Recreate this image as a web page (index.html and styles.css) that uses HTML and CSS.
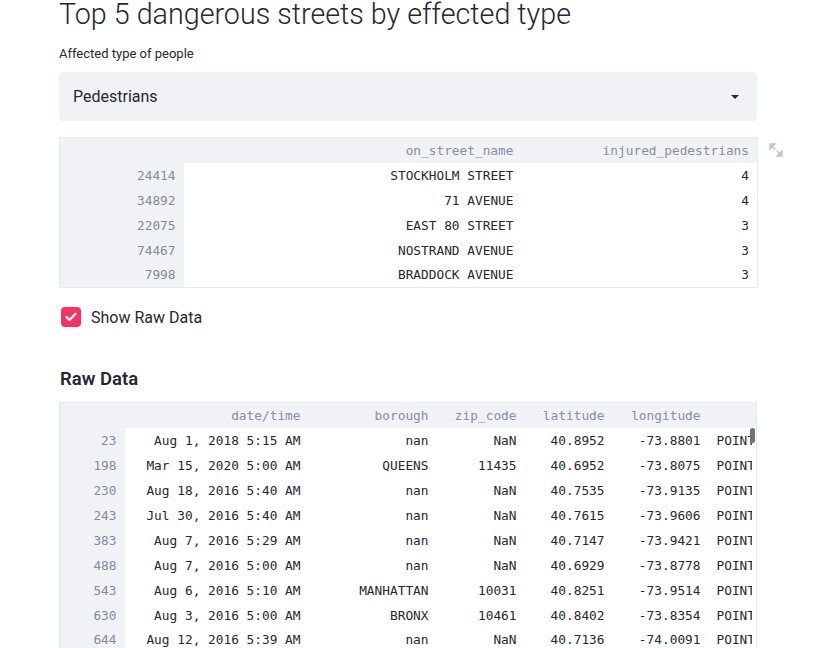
FILE: index.html
```html
<!DOCTYPE html>
<html>
<head>
<meta charset="utf-8">
<link rel="stylesheet" href="styles.css">
</head>
<body>
<div class="main">
  <h1 class="title">Top 5 dangerous streets by effected type</h1>
  <div class="label">Affected type of people</div>
  <div class="select">
    <span>Pedestrians</span>
    <svg class="caret" width="10" height="6" viewBox="0 0 10 6"><path d="M1 1h8L5 5z" fill="#262730"/></svg>
  </div>

  <div class="table-wrap t1">
    <table class="df">
      <thead>
        <tr><th class="idx"></th><th class="c1">on_street_name</th><th class="c2">injured_pedestrians</th></tr>
      </thead>
      <tbody>
        <tr><th class="idx">24414</th><td>STOCKHOLM STREET</td><td>4</td></tr>
        <tr><th class="idx">34892</th><td>71 AVENUE</td><td>4</td></tr>
        <tr><th class="idx">22075</th><td>EAST 80 STREET</td><td>3</td></tr>
        <tr><th class="idx">74467</th><td>NOSTRAND AVENUE</td><td>3</td></tr>
        <tr><th class="idx">7998</th><td>BRADDOCK AVENUE</td><td>3</td></tr>
      </tbody>
    </table>
    <svg class="expand" width="14" height="14" viewBox="0 0 14 14">
      <path d="M1 1h5L1 6z M3 3l3.5 3.5" fill="#c4c6cf" stroke="#c4c6cf" stroke-width="1.4"/>
      <path d="M13 13h-5l5-5z M11 11l-3.5-3.5" fill="#c4c6cf" stroke="#c4c6cf" stroke-width="1.4"/>
    </svg>
  </div>

  <label class="check">
    <span class="box"><svg width="12" height="10" viewBox="0 0 12 10"><path d="M1.5 5l3 3L10.5 1.8" fill="none" stroke="#fff" stroke-width="2.2" stroke-linecap="round" stroke-linejoin="round"/></svg></span>
    <span class="check-text">Show Raw Data</span>
  </label>

  <h2 class="sub">Raw Data</h2>

  <div class="table-wrap t2">
    <table class="df raw">
      <thead>
        <tr><th class="idx"></th><th class="w-date">date/time</th><th class="w-bor">borough</th><th class="w-zip">zip_code</th><th class="w-lat">latitude</th><th class="w-lon">longitude</th><th class="w-loc"></th></tr>
      </thead>
      <tbody>
        <tr><th class="idx">23</th><td>Aug 1, 2018 5:15 AM</td><td>nan</td><td>NaN</td><td>40.8952</td><td>-73.8801</td><td class="loc">POINT (-73.8801 40.8952)</td></tr>
        <tr><th class="idx">198</th><td>Mar 15, 2020 5:00 AM</td><td>QUEENS</td><td>11435</td><td>40.6952</td><td>-73.8075</td><td class="loc">POINT (-73.8075 40.6952)</td></tr>
        <tr><th class="idx">230</th><td>Aug 18, 2016 5:40 AM</td><td>nan</td><td>NaN</td><td>40.7535</td><td>-73.9135</td><td class="loc">POINT (-73.9135 40.7535)</td></tr>
        <tr><th class="idx">243</th><td>Jul 30, 2016 5:40 AM</td><td>nan</td><td>NaN</td><td>40.7615</td><td>-73.9606</td><td class="loc">POINT (-73.9606 40.7615)</td></tr>
        <tr><th class="idx">383</th><td>Aug 7, 2016 5:29 AM</td><td>nan</td><td>NaN</td><td>40.7147</td><td>-73.9421</td><td class="loc">POINT (-73.9421 40.7147)</td></tr>
        <tr><th class="idx">488</th><td>Aug 7, 2016 5:00 AM</td><td>nan</td><td>NaN</td><td>40.6929</td><td>-73.8778</td><td class="loc">POINT (-73.8778 40.6929)</td></tr>
        <tr><th class="idx">543</th><td>Aug 6, 2016 5:10 AM</td><td>MANHATTAN</td><td>10031</td><td>40.8251</td><td>-73.9514</td><td class="loc">POINT (-73.9514 40.8251)</td></tr>
        <tr><th class="idx">630</th><td>Aug 3, 2016 5:00 AM</td><td>BRONX</td><td>10461</td><td>40.8402</td><td>-73.8354</td><td class="loc">POINT (-73.8354 40.8402)</td></tr>
        <tr><th class="idx">644</th><td>Aug 12, 2016 5:39 AM</td><td>nan</td><td>NaN</td><td>40.7136</td><td>-74.0091</td><td class="loc">POINT (-74.0091 40.7136)</td></tr>
      </tbody>
    </table>
    <div class="scroll-thumb"></div>
  </div>
</div>
</body>
</html>
```
FILE: styles.css
```css
html, body {
  margin: 0;
  padding: 0;
  background: #ffffff;
  overflow: hidden;
  height: 648px;
}
body {
  font-family: "Roboto", "Noto Sans", sans-serif;
  color: #262730;
}
.main {
  width: 698px;
  padding-left: 59px;
}
.title {
  margin: 0;
  font-size: 28.7px;
  font-weight: 300;
  line-height: 29px;
  color: #262730;
}
.label {
  margin-top: 17px;
  font-size: 13px;
  line-height: 16px;
  color: #262730;
}
.select {
  margin-top: 10px;
  height: 49px;
  background: #f0f2f6;
  border-radius: 4px;
  display: flex;
  align-items: center;
  justify-content: space-between;
  padding: 0 17px 0 14px;
  font-size: 16px;
}
.caret { display: block; }
.table-wrap {
  position: relative;
}
.t1 { margin-top: 16px; }
.df {
  border-collapse: collapse;
  font-family: "DejaVu Sans Mono", monospace;
  font-size: 12.8px;
  color: #262730;
  border: 1px solid #e6e9ef;
  table-layout: fixed;
}
.df th, .df td {
  height: 25px;
  padding: 0 8px;
  text-align: right;
  white-space: nowrap;
  font-weight: 400;
  box-sizing: border-box;
  overflow: hidden;
}
.df thead th {
  background: #f0f2f6;
  color: #8a8ea3;
}
.df th.idx {
  background: #f0f2f6;
  color: #858aa0;
}
.t1 .df { width: 698px; }
.t1 .idx { width: 124px; }
.t1 .c1 { width: 338px; }
.t1 .c2 { width: 236px; }
.expand {
  position: absolute;
  left: 710px;
  top: 6px;
}
.check {
  display: flex;
  align-items: center;
  margin-top: 19px;
  margin-left: 2px;
}
.box {
  width: 20px;
  height: 20px;
  background: #f63366;
  border-radius: 4px;
  display: flex;
  align-items: center;
  justify-content: center;
}
.check-text {
  margin-left: 10px;
  font-size: 16px;
}
.sub {
  margin: 40px 0 0 1px;
  font-size: 18.5px;
  font-weight: 600;
  line-height: 24px;
}
.t2 {
  margin-top: 11px;
  width: 698px;
  overflow: hidden;
  border-right: 1px solid #e6e9ef;
  box-sizing: border-box;
  background: linear-gradient(#f0f2f6 0, #f0f2f6 26px, #ffffff 26px);
}
.raw {
  width: 692px;
  border-right: none;
}
.raw .idx { width: 65px; }
.raw .w-date { width: 184px; }
.raw .w-bor { width: 128px; }
.raw .w-zip { width: 88px; }
.raw .w-lat { width: 88px; }
.raw .w-lon { width: 96px; }
.raw .w-loc { width: 43px; }
.raw td.loc {
  text-align: left;
  padding-right: 0;
  text-overflow: clip;
}
.scroll-thumb {
  position: absolute;
  left: 691px;
  top: 26px;
  width: 5px;
  height: 15px;
  border-radius: 3px;
  background: #6f7176;
}
```
